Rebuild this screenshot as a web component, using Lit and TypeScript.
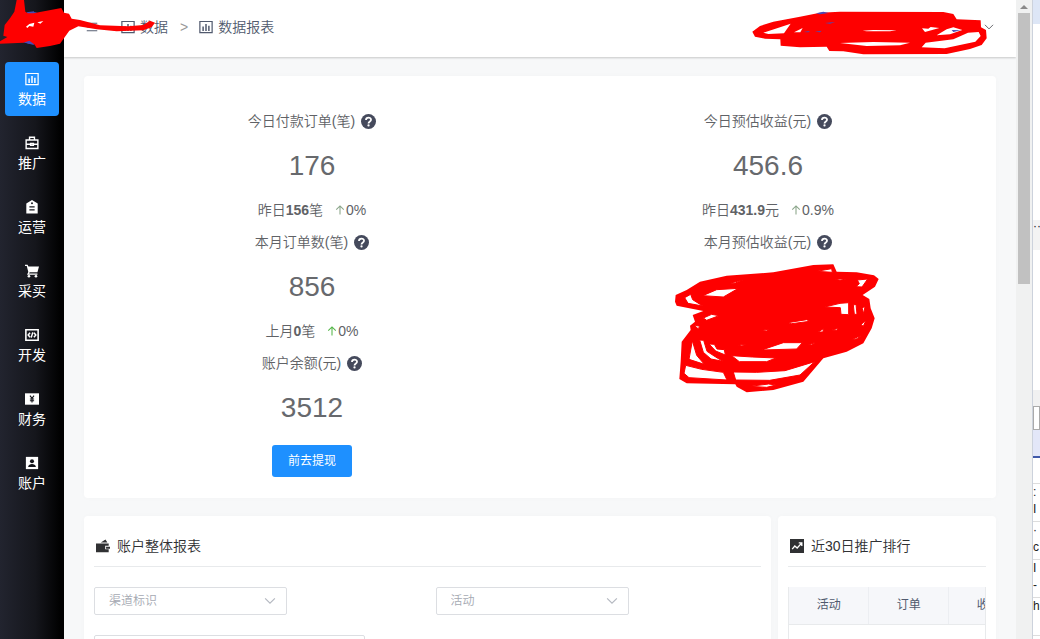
import { LitElement, html, css, svg, nothing } from "lit";
import { customElement, property } from "lit/decorators.js";

const glyphs: Record<string, unknown> = {
  chart: svg`<path fill="none" stroke="currentColor" stroke-width="1.4" d="M1 1.700h14v12.600H1z"/><path fill="none" stroke="currentColor" stroke-width="1.700" d="M4.700 12.500V7.500M8 12.500V4.500M11.300 12.500V6.500"/>`,
  briefcase: svg`<path fill="none" stroke="currentColor" stroke-width="1.6" d="M1.3 4.6h13.4v9.6H1.3zM5.2 4.4V1.5h5.6v2.9M1.3 9.4h4.9M9.8 9.4h4.9M6.4 8.6h3.2v2H6.4z"/>`,
  tag: svg`<path fill="currentColor" fill-rule="evenodd" d="M8 0l6.500 4v11.500h-13V4zM5 7v1.500h6V7zM5 10.500V12h6v-1.500zM8 2.700a1.100 1.100 0 1 0 0 2.200 1.100 1.100 0 0 0 0-2.200z"/>`,
  cart: svg`<path fill="currentColor" d="M0 .8h3l.9 2H16l-1.800 6.700H5.300l-.6 1.300h9.500v1.600H2.300l1.500-3.200L2 2.400H0z"/><circle cx="4.500" cy="14" r="1.500" fill="currentColor"/><circle cx="12.500" cy="14" r="1.500" fill="currentColor"/>`,
  code: svg`<path fill="none" stroke="currentColor" stroke-width="1.800" d="M1 2h14v12H1z"/><path fill="none" stroke="currentColor" stroke-width="1.700" d="M5.800 5.400L3.600 8l2.200 2.600M10.200 5.400L12.400 8l-2.200 2.600M8.900 5l-1.800 6"/>`,
  yen: svg`<path fill="currentColor" d="M0 1.500h16v13H0z"/><path fill="none" stroke="#14151b" stroke-width="1.300" d="M5.700 4.200L8 7.300l2.300-3.100M8 7v5M5.600 8h4.800M5.600 10h4.800"/>`,
  user: svg`<path fill="currentColor" d="M1 1h14v14H1z"/><circle cx="8" cy="6" r="2.300" fill="#14151b"/><path fill="#14151b" d="M3.500 12.500c.6-2.400 2.300-3.300 4.500-3.300s3.900.9 4.500 3.300z"/>`,
  wallet: svg`<path fill="currentColor" fill-rule="evenodd" d="M0 5h14.500v2.800H10.500v4h4V15H0zM5.500 4L10.800.5 13 4z"/><path fill="currentColor" d="M11.500 8.800H16v2.400h-4.500z"/>`,
  trend: svg`<path fill="currentColor" d="M0 0h16v16H0z"/><path fill="none" stroke="#fff" stroke-width="1.500" d="M2.500 11.500l3-3.500 2.700 2.300L13 5M10 4.500h3.500V8"/>`,
  help: svg`<circle cx="8" cy="8" r="8" fill="currentColor"/><path fill="none" stroke="#fff" stroke-width="1.900" d="M5.300 6.300C5.400 3 10.700 3 10.700 6.200 10.700 8 8 7.900 8 10.100"/><circle cx="8" cy="12.200" r="1.200" fill="#fff"/>`,
  up: svg`<path fill="none" stroke="currentColor" stroke-width="1.700" d="M8 15V1.500M2 7.500L8 1.500l6 6"/>`,
  down: svg`<path fill="none" stroke="currentColor" stroke-width="1.500" d="M1.500 4.500L8 11l6.500-6.500"/>`,
  menu: svg`<path fill="none" stroke="currentColor" stroke-width="1.300" d="M1 3h14M1 8h14M1 13h14"/>`,
};

@customElement("ui-icon")
class UiIcon extends LitElement {
  @property() name = "chart";
  static styles = css`
    :host { display: inline-block; width: 14px; height: 14px; flex: none; }
    .glyph { display: block; width: 100%; height: 100%; }
  `;
  render() {
    return html`<svg class="glyph" viewBox="0 0 16 16" aria-hidden="true">${glyphs[this.name]}</svg>`;
  }
}

interface Stat {
  label: string;
  value?: string;
  period?: string;
  previous?: string;
  unit?: string;
  change?: string;
  rising?: boolean;
  action?: string;
}

@customElement("stat-block")
class StatBlock extends LitElement {
  @property({ attribute: false }) stat!: Stat;
  static styles = css`
    :host { display: flex; flex-direction: column; align-items: center; color: #606266; }
    .line { display: flex; align-items: center; height: 32px; white-space: nowrap; }
    .previous { font-weight: 700; }
    .help { width: 15px; height: 15px; margin-left: 6px; color: #454a5c; }
    .value { font-size: 28px; line-height: 57px; color: #67696d; }
    .change { display: flex; align-items: center; margin-left: 12px; }
    .up { width: 10px; height: 10px; margin-right: 1px; color: #8ba58a; }
    .up.rising { color: #55b649; }
    .action {
      width: 80px; height: 32px; margin: 9px 0 0; padding: 0; border: 0; border-radius: 3px;
      background: #1e90ff; color: #fff; font: inherit; font-size: 12px; font-weight: 400; cursor: pointer;
    }
  `;
  render() {
    const s = this.stat;
    return html`
      <div class="line">${s.label}<ui-icon class="help" name="help"></ui-icon></div>
      ${s.value ? html`<div class="value">${s.value}</div>` : nothing}
      ${s.period
        ? html`<div class="line"><span>${s.period}<b class="previous">${s.previous}</b>${s.unit}</span>
            <span class="change"><ui-icon class="up ${s.rising ? "rising" : ""}" name="up"></ui-icon>${s.change}</span></div>`
        : nothing}
      ${s.action ? html`<button class="action">${s.action}</button>` : nothing}
    `;
  }
}

const nav = [
  ["chart", "数据"],
  ["briefcase", "推广"],
  ["tag", "运营"],
  ["cart", "采买"],
  ["code", "开发"],
  ["yen", "财务"],
  ["user", "账户"],
];

const orders: Stat[] = [
  { label: "今日付款订单(笔)", value: "176", period: "昨日", previous: "156", unit: "笔", change: "0%" },
  { label: "本月订单数(笔)", value: "856", period: "上月", previous: "0", unit: "笔", change: "0%", rising: true },
  { label: "账户余额(元)", value: "3512", action: "前去提现" },
];

const income: Stat[] = [
  { label: "今日预估收益(元)", value: "456.6", period: "昨日", previous: "431.9", unit: "元", change: "0.9%" },
  { label: "本月预估收益(元)" },
];

@customElement("app-root")
class AppRoot extends LitElement {
  static styles = css`
    :host {
      display: flex; position: relative; height: 100vh; overflow: hidden; background: #f7f8f9;
      font-family: "Liberation Sans", "Noto Sans CJK SC", sans-serif; font-size: 14px; font-weight: 350; line-height: 20px; color: #515a6e;
    }
    * { box-sizing: border-box; }
    .side { flex: none; width: 64px; background: linear-gradient(90deg, #22242f, #15161c 55%, #000 95%); }
    .logo { display: flex; align-items: center; justify-content: center; height: 62px; padding-bottom: 6px; }
    .disc { width: 32px; height: 32px; border-radius: 50%; background: #2f5bd0; }
    .nav { display: flex; flex-direction: column; align-items: center; gap: 10px; font-weight: 400; }
    .item {
      display: flex; flex-direction: column; align-items: center; gap: 3px; width: 54px; height: 54px;
      padding-top: 10px; border-radius: 4px; color: #fff; text-decoration: none;
    }
    .item.active { background: #1e90ff; }
    .main { flex: 1; min-width: 0; overflow: hidden; }
    .top {
      display: flex; align-items: center; justify-content: space-between; height: 57px; padding: 0 18px 4px 22px;
      background: #fff; box-shadow: 0 1px 2px rgba(0, 0, 0, 0.2);
    }
    .crumbs { display: flex; align-items: center; }
    .menu { width: 12px; height: 12px; margin-right: 23px; }
    .crumb { display: flex; align-items: center; gap: 5px; color: inherit; text-decoration: none; }
    .sep { margin: 0 11px 0 12px; color: #999; }
    .account { display: flex; padding: 4px; border: 0; background: none; color: #606266; }
    .caret { width: 10px; height: 10px; }
    .content { display: grid; gap: 18px; padding: 19px 20px; }
    .card { min-width: 0; border-radius: 4px; background: #fff; box-shadow: 0 0 6px rgba(0, 0, 0, 0.02); }
    .stats { display: grid; grid-template-columns: 1fr 1fr; align-items: start; padding: 29px 0 21px; }
    .reports { display: grid; grid-template-columns: minmax(0, 1fr) 218px; gap: 7px; }
    .panel { height: 320px; padding: 0 10px; overflow: hidden; }
    .title {
      display: flex; align-items: center; gap: 7px; height: 51px; margin: 0 0 20px; padding-top: 10px;
      border-bottom: 1px solid #e8eaec; font-size: 14px; font-weight: inherit; color: #303133;
    }
    .title ui-icon { margin-left: 2px; }
    .filters { display: grid; grid-template-columns: 1fr 1fr; gap: 20px 16px; }
    .field { display: grid; align-items: center; width: 193px; height: 28px; }
    .field > * { grid-area: 1 / 1; }
    .select, .date {
      width: 100%; height: 28px; padding: 0 14px; border: 1px solid #dcdee2; border-radius: 2px;
      appearance: none; background: #fff; color: #a5a9b2; font: inherit; font-size: 12px;
    }
    .arrow { justify-self: end; width: 12px; height: 12px; margin-right: 11px; color: #b4b8c0; pointer-events: none; }
    .range { width: 271px; }
    .scroll { overflow: hidden; border: solid #e8eaec; border-width: 0 1px; }
    .table { width: 320px; border-collapse: collapse; table-layout: fixed; font-size: 12px; }
    .table th { height: 37px; padding: 0; border-right: 1px solid #eceef2; border-bottom: 1px solid #e8eaec; background: #f6f7fa; font-weight: 400; }
    .table td { height: 120px; }
    .bar { flex: none; width: 16px; padding: 0 2px; background: #f0f1f1; }
    .cap { display: flex; align-items: center; justify-content: center; height: 13px; }
    .tri { border: 4px solid transparent; border-top: 0; border-bottom-color: #8a8a8a; }
    .thumb { height: 271px; background: #c1c1c1; }
    .dock { flex: none; width: 8px; overflow: hidden; border-left: 1px solid #ccd2dc; background: #fff; }
    .tab { height: 24px; background: #dde6f6; }
    .pane { height: 196px; }
    .more { height: 30px; background: #f3f3f3; font-size: 12px; line-height: 12px; color: #222; }
    .gap { height: 140px; }
    .tool { height: 16px; background: #f1f1f1; }
    .box { height: 24px; border: 1px solid #aaa; }
    .sel { height: 28px; border-bottom: 2px solid #4059a9; background: #e3e7f8; }
    .row { height: 26px; border-bottom: 1px solid #ddd; }
    .code { height: 38px; border-bottom: 1px solid #ddd; font-size: 12px; line-height: 17px; color: #222; }
    .ink { position: absolute; fill: #fe0000; pointer-events: none; }
    .ink .hole { fill: #fff; }
    .ink .blue { fill: #4a49b5; }
    .ink-logo { left: 0; top: 0; width: 160px; height: 50px; }
    .ink-account { right: 40px; top: 0; width: 260px; height: 60px; }
    .month { position: relative; }
    .ink-income { left: 50%; top: 29px; width: 230px; height: 145px; margin-left: -108px; }
    .ink-income .hole { stroke: #fe0000; stroke-width: 3px; }
  `;

  render() {
    return html`
      <aside class="side">
        <div class="logo"><span class="disc"></span></div>
        <nav class="nav">
          ${nav.map(([icon, label], i) => html`<a class="item ${i === 0 ? "active" : ""}" href="#"><ui-icon name=${icon}></ui-icon><span>${label}</span></a>`)}
        </nav>
      </aside>
      <main class="main">
        <header class="top">
          <div class="crumbs">
            <ui-icon class="menu" name="menu"></ui-icon>
            <a class="crumb" href="#"><ui-icon name="chart"></ui-icon>数据</a>
            <span class="sep">&gt;</span>
            <a class="crumb" href="#"><ui-icon name="chart"></ui-icon>数据报表</a>
          </div>
          <button class="account" aria-label="账户"><ui-icon class="caret" name="down"></ui-icon></button>
        </header>
        <div class="content">
          <section class="card stats">
            <div>${orders.map((s) => html`<stat-block .stat=${s}></stat-block>`)}</div>
            <div>
              <stat-block .stat=${income[0]}></stat-block>
              <div class="month">
                <stat-block .stat=${income[1]}></stat-block>
                <svg class="ink ink-income" viewBox="0 0 690 435" aria-hidden="true">
                  <path d="M47 120L80 105 120 80 200 62 340 52 460 30 520 28 530 50 590 52 642 61 656 72 645 95 608 120 628 132 632 160 644 190 635 220 610 265 560 290 490 310 430 380 340 405 260 412 230 395 226 388 80 385 58 372 62 320 65 260 92 225 90 212 105 200 98 180 130 168 50 152 45 140z"/>
                  <path class="hole" d="M74 128L92 118 98 134 128 153 84 145zM205 86L250 74 226 84zM128 122L170 104 235 100 190 126zM470 49L515 41 517 52zM525 72L557 72 540 76zM592 75L623 72 606 96 588 95 598 86zM494 156L540 145 566 143V179L543 178 541 158zM580 150L588 148 591 178 583 178zM606 158L615 155 611 176zM130 189L155 178 177 182 140 196zM102 210L120 214 114 221zM383 203L440 194 449 199 395 206zM302 226L325 223 321 228zM475 231L490 221 489 231zM515 225L537 220 530 226zM603 209L618 195 610 214zM305 285L370 263 427 263 410 282zM235 271L258 267 246 273zM446 270L466 262 456 270zM572 255L602 242 592 251zM97 257L110 301 133 328 87 313zM119 255L131 256 141 289 167 306 189 319 153 312 130 292zM147 267L163 268 171 282 193 284 196 300 167 288zM215 302L277 306 348 309 320 320 238 320zM77 331L125 343 190 352 201 375 87 368 72 355zM220 351L290 352 375 347 464 320 420 360 329 376 227 375zM270 394L326 387 348 390 320 397z"/>
                </svg>
              </div>
            </div>
          </section>
          <div class="reports">
            <section class="card panel">
              <h2 class="title"><ui-icon name="wallet"></ui-icon>账户整体报表</h2>
              <div class="filters">
                ${["渠道标识", "活动"].map((t) => html`<label class="field">
                  <select class="select" aria-label=${t}><option>${t}</option></select>
                  <ui-icon class="arrow" name="down"></ui-icon>
                </label>`)}
                <label class="field range"><input class="date" aria-label="日期" /></label>
              </div>
            </section>
            <section class="card panel">
              <h2 class="title"><ui-icon name="trend"></ui-icon>近30日推广排行</h2>
              <div class="scroll">
                <table class="table">
                  <thead><tr><th>活动</th><th>订单</th><th>收益</th><th></th></tr></thead>
                  <tbody><tr><td></td><td></td><td></td><td></td></tr></tbody>
                </table>
              </div>
            </section>
          </div>
        </div>
      </main>
      <div class="bar"><div class="cap"><span class="tri"></span></div><div class="thumb"></div></div>
      <aside class="dock">
        <div class="tab"></div><div class="pane"></div><div class="more">··</div><div class="gap"></div>
        <div class="tool"></div><div class="box"></div><div class="sel"></div><div class="row"></div>
        <div class="code">:<br />I</div><div class="code">·<br />c</div><div class="code">I<br />-</div><div class="code">h</div>
      </aside>
      <svg class="ink ink-logo" viewBox="0 0 480 150" aria-hidden="true">
        <path class="blue" d="M80 37L102 34 104 44 92 50zM66 126L85 118 104 136z"/>
        <path d="M50 0H72L76 35 84 40 100 40 184 24 192 38 207 41 215 56 240 60 300 76 385 79 430 75 450 62 465 68 455 82 430 91 350 94 290 88 235 79 208 92 180 131 150 138 110 144 104 134 88 122 70 128 0 131V124L22 111 10 107 14 75 30 55 43 35z"/>
        <path class="hole" d="M78 80L88 72 103 68 100 80 88 78 82 84zM112 67L130 63 121 71z"/>
      </svg>
      <svg class="ink ink-account" viewBox="0 0 780 180" aria-hidden="true">
        <path d="M37 95L60 78 100 65 180 50 240 38 300 35 610 36 640 42 650 58 722 61 723 82 738 90 740 115 725 135 690 147 620 162 370 163 310 154 268 153 260 140 180 142 122 137 121 118 75 116 45 110z"/>
        <path class="hole" d="M70 98L152 71 132 100 85 102zM162 97L188 84 181 97zM300 129L400 126 510 128 480 136 380 138zM557 128L640 118 684 98 716 96 722 108 706 125 614 145 545 142zM590 106L620 88 640 82 667 90 630 103zM546 85L565 86 572 81 598 84 555 96zM368 92L400 90 470 91 450 94 380 94z"/>
        <path class="blue" d="M228 40L250 35 266 39 240 43zM190 96L210 93 205 97zM225 95L245 92 240 97zM255 69L285 66 270 71zM635 90L662 91 640 96z"/>
      </svg>
    `;
  }
}
